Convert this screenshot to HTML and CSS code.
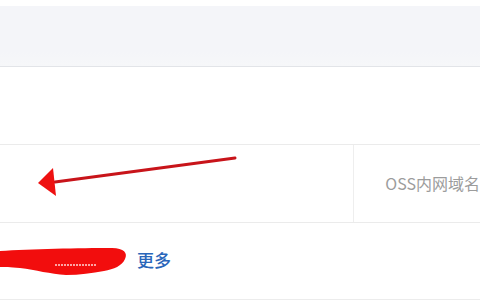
FILE: index.html
```html
<!DOCTYPE html>
<html lang="zh-CN">
<head>
    <meta charset="UTF-8">
    <meta name="viewport" content="width=device-width, initial-scale=1.0">
    <title>OSS 域名</title>
    <link rel="stylesheet" href="styles.css">
</head>
<body>
<div class="page">
    <div class="toolbar"></div>
    <div class="spacer"></div>
    <div class="table">
        <div class="row">
            <div class="cell cell-main"></div>
            <div class="cell cell-label">OSS内网域名</div>
        </div>
        <div class="row row-last">
            <div class="cell cell-links">
                <a class="more-link" href="#">更多</a>
            </div>
        </div>
    </div>
    <!-- annotation drawn over the screenshot -->
    <svg class="marks" width="480" height="300" viewBox="0 0 480 300">
        <path d="M0 251 C30 249 80 248 112 248 C124 248 128 253 125 259 C122 266 114 269 104 271 C92 273 80 275 66 275 C50 274 36 270 20 268 C10 267 4 267 0 267 Z" fill="#f20d0d"/>
        <path d="M55 265 L97 265" stroke="#ffd6d6" stroke-width="1.5" stroke-dasharray="2 1"/>
        <line x1="235" y1="158" x2="55" y2="182" stroke="#c8141a" stroke-width="3" stroke-linecap="round"/>
        <polygon points="38,183 53,168 56,196" fill="#ee1111"/>
    </svg>
</div>
</body>
</html>
```

FILE: styles.css
```css
body {
    margin: 0;
    font-family: "Noto Sans CJK SC", "Noto Sans", sans-serif;
    background-color: #fff;
}
.page {
    position: relative;
    width: 480px;
    height: 300px;
    overflow: hidden;
    padding-top: 6px;
    box-sizing: border-box;
}
.toolbar {
    height: 60px;
    background: linear-gradient(#f4f5f9 75%, #f6f7f9);
    border-bottom: 1px solid #e2e4e8;
}
.spacer {
    height: 77px;
}
.row {
    display: flex;
    height: 77px;
    border-top: 1px solid #ebebeb;
}
.row-last {
    height: 76px;
    border-bottom: 2px solid #ececec;
}
.cell-main {
    width: 354px;
    border-right: 1px solid #eeeeee;
}
.cell-label {
    flex: 1;
    padding-left: 31px;
    display: flex;
    align-items: center;
    font-size: 16px;
    color: #9c9c9c;
    white-space: nowrap;
    padding-bottom: 2px;
}
.cell-links {
    display: flex;
    align-items: center;
    padding-left: 137px;
    font-size: 17px;
    padding-bottom: 4px;
}
.more-link {
    color: #2a66ba;
    text-decoration: none;
    font-weight: 500;
}
.marks {
    position: absolute;
    top: 0;
    left: 0;
}
```
